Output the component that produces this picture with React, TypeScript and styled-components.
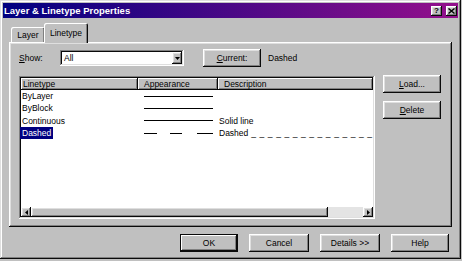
import React from 'react';
import styled, { createGlobalStyle, css } from 'styled-components';

const GlobalStyle = createGlobalStyle`
  html, body {
    margin: 0;
    padding: 0;
    background: #c0c0c0;
  }
  body {
    font-family: "Liberation Sans", Arial, sans-serif;
    font-size: 8.5px;
    color: #000;
  }
`;

const raised = css`
  box-shadow: inset -1px -1px #0a0a0a, inset 1px 1px #ffffff, inset -2px -2px #808080,
    inset 2px 2px #dfdfdf;
`;

const sunken = css`
  box-shadow: inset -1px -1px #ffffff, inset 1px 1px #808080, inset -2px -2px #dfdfdf,
    inset 2px 2px #0a0a0a;
`;

type Dir = 'left' | 'right' | 'down';

const Arrow = ({ dir }: { dir: Dir }) => {
  const points =
    dir === 'down' ? '0,0 5,0 2.5,3' : dir === 'left' ? '3,0 3,5 0,2.5' : '0,0 0,5 3,2.5';
  const w = dir === 'down' ? 5 : 3;
  const h = dir === 'down' ? 3 : 5;
  return (
    <svg width={w} height={h} viewBox={`0 0 ${w} ${h}`}>
      <polygon points={points} fill="#000" />
    </svg>
  );
};

const Sample = ({ dashed }: { dashed?: boolean }) => (
  <svg width="69" height="3" viewBox="0 0 69 3">
    {dashed ? (
      <>
        <line x1="0" y1="1.5" x2="13" y2="1.5" stroke="#000" strokeWidth="1" />
        <line x1="26" y1="1.5" x2="38" y2="1.5" stroke="#000" strokeWidth="1" />
        <line x1="53" y1="1.5" x2="69" y2="1.5" stroke="#000" strokeWidth="1" />
      </>
    ) : (
      <line x1="0" y1="1.5" x2="69" y2="1.5" stroke="#000" strokeWidth="1" />
    )}
  </svg>
);

const rows = [
  { name: 'ByLayer', dashed: false, desc: '' },
  { name: 'ByBlock', dashed: false, desc: '' },
  { name: 'Continuous', dashed: false, desc: 'Solid line' },
  { name: 'Dashed', dashed: true, desc: 'Dashed', pattern: true, selected: true },
];

export default function App() {
  return (
    <>
      <GlobalStyle />
      <Window>
        <TitleBar>
          <Title>Layer &amp; Linetype Properties</Title>
          <TitleButtons>
            <TitleButton>?</TitleButton>
            <TitleButton>
              <svg width="7" height="6" viewBox="0 0 7 6">
                <path d="M0.5 0.5 L6.5 5.5 M6.5 0.5 L0.5 5.5" stroke="#000" strokeWidth="1.4" />
              </svg>
            </TitleButton>
          </TitleButtons>
        </TitleBar>

        <Body>
          <TabStrip>
            <Tab $width={34}>Layer</Tab>
            <Tab $width={44} $active>
              Linetype
            </Tab>
          </TabStrip>

          <Panel>
            <TopRow>
              <FieldLabel>
                <u>S</u>how:
              </FieldLabel>
              <ComboBox>
                <ComboText>All</ComboText>
                <ComboButton>
                  <Arrow dir="down" />
                </ComboButton>
              </ComboBox>
              <Button $width={58} $gap={19}>
                <u>C</u>urrent:
              </Button>
              <CurrentValue>Dashed</CurrentValue>
            </TopRow>

            <MainRow>
              <ListView>
                <Header>
                  <HeaderCell $pad={2}>Linetype</HeaderCell>
                  <HeaderCell $pad={6}>Appearance</HeaderCell>
                  <HeaderCell $pad={6}>Description</HeaderCell>
                </Header>
                <Rows>
                  {rows.map((r) => (
                    <Row key={r.name}>
                      <NameCell>
                        <NameText $selected={r.selected}>{r.name}</NameText>
                      </NameCell>
                      <SampleCell>
                        <Sample dashed={r.dashed} />
                      </SampleCell>
                      <DescCell>
                        {r.desc}
                        {r.pattern && <Pattern> _ _ _ _ _ _ _ _ _ _ _ _ _ _ _</Pattern>}
                      </DescCell>
                    </Row>
                  ))}
                </Rows>
                <ScrollBar>
                  <ScrollButton>
                    <Arrow dir="left" />
                  </ScrollButton>
                  <Thumb />
                  <Track />
                  <ScrollButton>
                    <Arrow dir="right" />
                  </ScrollButton>
                </ScrollBar>
              </ListView>

              <SideButtons>
                <Button $width={58}>
                  <u>L</u>oad...
                </Button>
                <Button $width={58}>
                  <u>D</u>elete
                </Button>
              </SideButtons>
            </MainRow>
          </Panel>

          <Footer>
            <Button $width={58} $default>
              OK
            </Button>
            <Button $width={60}>Cancel</Button>
            <Button $width={60}>Details &gt;&gt;</Button>
            <Button $width={58}>Help</Button>
          </Footer>
        </Body>
      </Window>
    </>
  );
}

const Window = styled.div`
  width: 461px;
  height: 259px;
  box-sizing: border-box;
  padding: 3px;
  background: #c0c0c0;
  box-shadow: inset -1px -1px #0a0a0a, inset 1px 1px #dfdfdf, inset -2px -2px #808080,
    inset 2px 2px #ffffff;
  display: flex;
  flex-direction: column;
`;

const TitleBar = styled.div`
  height: 15px;
  display: flex;
  align-items: center;
  justify-content: space-between;
  padding: 0 1px 0 1px;
  background: linear-gradient(to right, #000080, #94108c);
`;

const Title = styled.span`
  color: #fff;
  font-weight: bold;
  font-size: 9.5px;
`;

const TitleButtons = styled.div`
  display: flex;
  gap: 4px;
`;

const TitleButton = styled.div`
  width: 11px;
  height: 10px;
  box-sizing: border-box;
  background: #c0c0c0;
  ${raised};
  display: flex;
  align-items: center;
  justify-content: center;
  font-weight: bold;
  font-size: 8px;
  line-height: 1;
`;

const Body = styled.div`
  flex: 1;
  display: flex;
  flex-direction: column;
  padding: 5px 6px 0 6px;
`;

const TabStrip = styled.div`
  height: 19px;
  display: flex;
  align-items: flex-end;
  padding-left: 2px;
`;

const Tab = styled.div<{ $active?: boolean; $width: number }>`
  position: relative;
  z-index: ${(p) => (p.$active ? 1 : 0)};
  box-sizing: border-box;
  width: ${(p) => p.$width}px;
  height: ${(p) => (p.$active ? 20 : 15)}px;
  margin-left: ${(p) => (p.$active ? -1 : 0)}px;
  margin-bottom: ${(p) => (p.$active ? -1 : 0)}px;
  background: #c0c0c0;
  border-radius: 2px 2px 0 0;
  box-shadow: inset 1px 1px #ffffff, inset -1px 0 #0a0a0a, inset -2px 0 #808080;
  display: flex;
  align-items: center;
  justify-content: center;
`;

const Panel = styled.div`
  box-sizing: border-box;
  height: 185px;
  padding: 7px 10px 8px 10px;
  ${raised};
  display: flex;
  flex-direction: column;
`;

const TopRow = styled.div`
  height: 18px;
  display: flex;
  align-items: center;
`;

const FieldLabel = styled.span`
  width: 41px;
`;

const ComboBox = styled.div`
  width: 124px;
  height: 16px;
  box-sizing: border-box;
  padding: 2px;
  background: #fff;
  ${sunken};
  display: flex;
  align-items: stretch;
`;

const ComboText = styled.span`
  flex: 1;
  padding-left: 2px;
  display: flex;
  align-items: center;
`;

const ComboButton = styled.span`
  width: 10px;
  background: #c0c0c0;
  ${raised};
  display: flex;
  align-items: center;
  justify-content: center;
`;

const Button = styled.div<{ $width: number; $gap?: number; $default?: boolean }>`
  width: ${(p) => p.$width}px;
  height: 18px;
  margin-left: ${(p) => p.$gap ?? 0}px;
  box-sizing: border-box;
  background: #c0c0c0;
  ${raised};
  display: flex;
  align-items: center;
  justify-content: center;
  ${(p) =>
    p.$default &&
    css`
      outline: 1px solid #0a0a0a;
      outline-offset: -1px;
      box-shadow: inset -2px -2px #0a0a0a, inset 2px 2px #ffffff, inset -3px -3px #808080;
    `}
`;

const CurrentValue = styled.span`
  margin-left: 7px;
`;

const MainRow = styled.div`
  margin-top: 8px;
  display: flex;
  gap: 8px;
`;

const ListView = styled.div`
  width: 356px;
  height: 143px;
  margin-top: 1px;
  box-sizing: border-box;
  padding: 2px;
  background: #fff;
  ${sunken};
  display: flex;
  flex-direction: column;
`;

const Header = styled.div`
  height: 12px;
  display: grid;
  grid-template-columns: 117px 80px 1fr;
`;

const HeaderCell = styled.div<{ $pad: number }>`
  background: #c0c0c0;
  box-shadow: inset -1px -1px #0a0a0a, inset 1px 1px #ffffff, inset -2px -2px #808080;
  padding-left: ${(p) => p.$pad}px;
  display: flex;
  align-items: center;
`;

const Rows = styled.div`
  flex: 1;
`;

const Row = styled.div`
  height: 12.3px;
  display: grid;
  grid-template-columns: 117px 80px 1fr;
  align-items: center;
`;

const NameCell = styled.div`
  margin-left: -1px;
`;

const NameText = styled.span<{ $selected?: boolean }>`
  padding: 1px 2px;
  background: ${(p) => (p.$selected ? '#000080' : 'transparent')};
  color: ${(p) => (p.$selected ? '#fff' : '#000')};
`;

const SampleCell = styled.div`
  padding-left: 6px;
  display: flex;
  align-items: center;
`;

const DescCell = styled.div`
  padding-left: 1px;
  white-space: nowrap;
  overflow: hidden;
`;

const Pattern = styled.span`
  letter-spacing: 0.6px;
`;

const ScrollBar = styled.div`
  height: 10px;
  display: flex;
`;

const ScrollButton = styled.div`
  width: 10px;
  background: #c0c0c0;
  ${raised};
  display: flex;
  align-items: center;
  justify-content: center;
`;

const Thumb = styled.div`
  width: 297px;
  background: #c0c0c0;
  ${raised};
`;

const Track = styled.div`
  flex: 1;
  background: #e4e4e4;
`;

const SideButtons = styled.div`
  display: flex;
  flex-direction: column;
  gap: 8px;
`;

const Footer = styled.div`
  margin-top: 7px;
  padding-right: 3px;
  display: flex;
  justify-content: flex-end;
  gap: 11px;
`;
